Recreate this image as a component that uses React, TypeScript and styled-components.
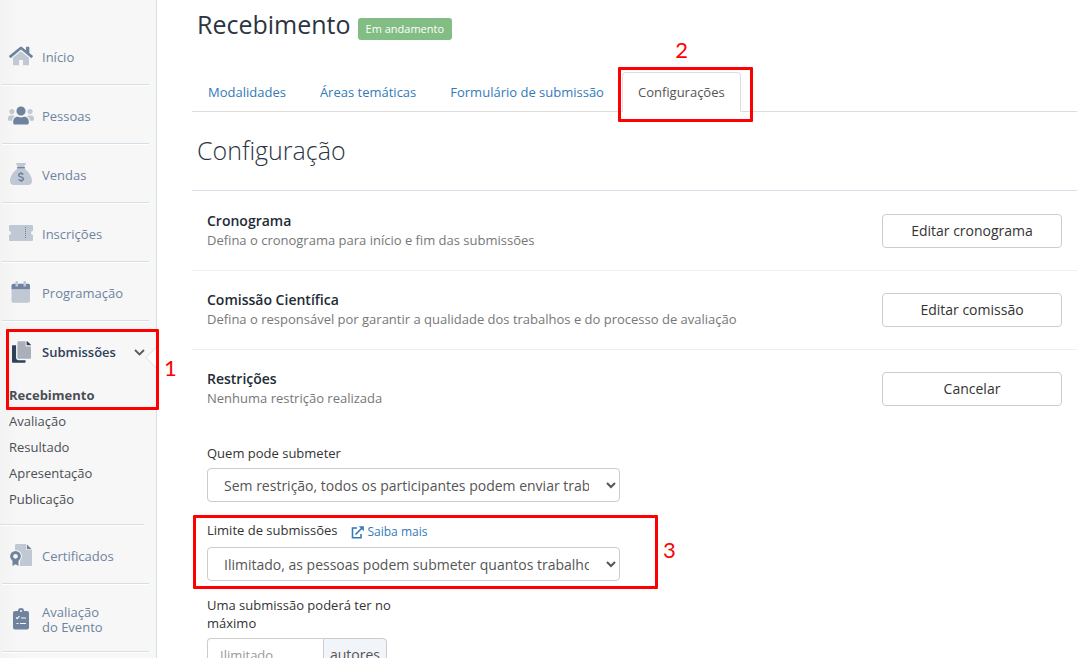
import React from "react";
import styled, { createGlobalStyle, css } from "styled-components";

const GlobalStyle = createGlobalStyle`
  *, *::before, *::after { box-sizing: border-box; }
  body {
    margin: 0;
    background: #fff;
    color: #333;
    font-family: "Open Sans", "Liberation Sans", sans-serif;
    font-size: 13px;
    line-height: 18px;
  }
`;

const Shell = styled.div`
  display: flex;
  height: 100vh;
  overflow: hidden;
`;

/* ---------- sidebar ---------- */

const Sidebar = styled.nav`
  flex: 0 0 157px;
  padding-top: 26px;
  border-right: 1px solid #d5dfe8;
  background: linear-gradient(to right, #f3f3f3, #f7f7f7 20px);
`;

const NavItem = styled.a<{ $active?: boolean; $tall?: boolean }>`
  display: flex;
  align-items: center;
  gap: 8px;
  height: ${(p) => (p.$tall ? 68 : 59)}px;
  margin: 0 7px 0 2px;
  padding: 4px 0 0 6px;
  border-bottom: 1px solid #d5dfe8;
  box-shadow: 0 1px 0 #fff;
  color: #6f839f;
  line-height: 15px;
  text-decoration: none;
  ${(p) =>
    p.$active &&
    css`
      position: relative;
      border-bottom: 0;
      box-shadow: none;
      color: #2f4059;
      font-weight: 600;
    `}
`;

const NavText = styled.span`
  max-width: 74px;
`;

const IconSlot = styled.span`
  display: flex;
  flex: 0 0 26px;
  justify-content: center;
  padding-bottom: 2px;
`;

const Chevron = styled.svg`
  margin: 0 4px 0 auto;
`;

const Notch = styled.svg`
  position: absolute;
  right: -8px;
  top: 25px;
`;

const Group = styled.div`
  position: relative;
`;

const SubList = styled.ul`
  margin: 0 12px 0 0;
  padding: 2px 0 12px 9px;
  border-bottom: 1px solid #d5dfe8;
  box-shadow: 0 1px 0 #fff;
  list-style: none;
`;

const SubLink = styled.a<{ $current?: boolean }>`
  display: block;
  color: #4b4f55;
  font-weight: ${(p) => (p.$current ? 700 : 400)};
  line-height: 26px;
  text-decoration: none;
`;

/* ---------- callouts ---------- */

const Frame = styled.div<{ $inset: string }>`
  position: absolute;
  inset: ${(p) => p.$inset};
  z-index: 2;
  border: 3px solid #fe0000;
  border-radius: 1px;
  pointer-events: none;
`;

const Mark = styled.span<{ $place: "right" | "top" }>`
  position: absolute;
  color: #fe0000;
  font: 400 22px/24px Lato, sans-serif;
  ${(p) =>
    p.$place === "right"
      ? css`
          left: calc(100% + 8px);
          top: calc(50% - 14px);
        `
      : css`
          left: calc(50% - 10px);
          bottom: calc(100% + 8px);
        `}
`;

/* ---------- main column ---------- */

const Main = styled.main`
  flex: 1;
  min-width: 0;
  padding: 6px 5px 0 35px;
`;

const TitleRow = styled.header`
  display: flex;
  align-items: center;
  gap: 7px;
  height: 36px;
  padding-left: 5px;
`;

const Title = styled.h1`
  margin: 0;
  color: #2b3440;
  font-size: 25px;
  font-weight: 400;
  line-height: 36px;
`;

const Badge = styled.span`
  margin-top: 9px;
  padding: 0 8px;
  border-radius: 3px;
  background: #82bd84;
  color: #fff;
  font-size: 11px;
  line-height: 22px;
`;

const Tabs = styled.div`
  display: flex;
  gap: 2px;
  height: 40px;
  margin-top: 30px;
  border-bottom: 1px solid #ddd;
`;

const TabWrap = styled.div`
  position: relative;
`;

const Tab = styled.a<{ $active?: boolean }>`
  display: block;
  height: 40px;
  padding: 10px 15px;
  border: 1px solid transparent;
  border-radius: 4px 4px 0 0;
  color: #337ab7;
  text-decoration: none;
  white-space: nowrap;
  ${(p) =>
    p.$active &&
    css`
      border-color: #ddd #ddd #fff;
      background: #fff;
      color: #555;
    `}
`;

const SectionTitle = styled.h2`
  margin: 0;
  padding: 20px 5px 22px;
  border-bottom: 1px solid #d9dfe8;
  color: #2b3440;
  font-size: 25px;
  font-weight: 300;
  line-height: 36px;
`;

const Rows = styled.div`
  padding-top: 1px;
`;

const Row = styled.section<{ $last?: boolean }>`
  display: flex;
  align-items: center;
  justify-content: space-between;
  height: 79px;
  border-bottom: 1px solid ${(p) => (p.$last ? "transparent" : "#eee")};
  padding: 0 15px;
`;

const RowTitle = styled.h3`
  margin: 0;
  color: #222b36;
  font-size: 14px;
  font-weight: 600;
  line-height: 18px;
`;

const RowText = styled.p`
  margin: 0;
  color: #777;
  line-height: 20px;
`;

const Button = styled.button`
  flex: 0 0 180px;
  height: 34px;
  border: 1px solid #ccc;
  border-radius: 4px;
  background: #fff;
  color: #333;
  font: inherit;
  font-size: 14px;
`;

const Form = styled.form`
  padding: 15px 15px 0;
`;

const Field = styled.div<{ $gap?: number }>`
  position: relative;
  width: 413px;
  max-width: 100%;
  margin-bottom: ${(p) => p.$gap ?? 15}px;
`;

const LabelRow = styled.div`
  display: flex;
  gap: 14px;
  margin-bottom: 6px;
`;

const Label = styled.label`
  display: block;
  max-width: 200px;
`;

const HelpLink = styled.a`
  display: flex;
  align-items: center;
  gap: 3px;
  padding-top: 2px;
  color: #337ab7;
  font-size: 12px;
  text-decoration: none;
`;

const Select = styled.select`
  display: block;
  width: 100%;
  height: 34px;
  padding: 6px 14px 6px 12px;
  border: 1px solid #ccc;
  border-radius: 4px;
  background: #fff;
  color: #555;
  font: inherit;
  font-size: 14px;
`;

const InputGroup = styled.div`
  display: flex;
  width: 180px;
  margin-top: 6px;
`;

const Input = styled.input`
  flex: 1;
  min-width: 0;
  height: 34px;
  padding: 6px 12px;
  border: 1px solid #ccc;
  border-right: 0;
  border-radius: 4px 0 0 4px;
  font: inherit;
  &::placeholder { color: #999; }
`;

const Addon = styled.span`
  padding: 0 6px;
  border: 1px solid #ccc;
  border-radius: 0 4px 4px 0;
  background: #f1f4f9;
  color: #555;
  font-size: 14px;
  line-height: 32px;
`;

/* ---------- icons ---------- */

const DARK = "#6f839f";
const LIGHT = "#bfc8d3";

const HomeIcon = () => (
  <svg width="24" height="22" viewBox="0 0 576 512" aria-hidden="true">
    <path fill={LIGHT} d="M280.4 148.3L96 300.1V464a16 16 0 0 0 16 16l112-.3a16 16 0 0 0 16-16V368a16 16 0 0 1 16-16h64a16 16 0 0 1 16 16v95.6a16 16 0 0 0 16 16L464 480a16 16 0 0 0 16-16V300L295.7 148.3a12.2 12.2 0 0 0-15.3 0z" />
    <path fill={DARK} d="M571.6 251.5L488 182.6V44a12 12 0 0 0-12-12h-56a12 12 0 0 0-12 12v72.7L318.5 43a48 48 0 0 0-61 0L4.3 251.5a12 12 0 0 0-1.6 16.9l25.5 31a12 12 0 0 0 16.9 1.6l235.3-193.7a12.2 12.2 0 0 1 15.3 0L530.9 301a12 12 0 0 0 16.9-1.6l25.5-31a12 12 0 0 0-1.7-16.9z" />
  </svg>
);

const PeopleIcon = () => (
  <svg width="26" height="21" viewBox="0 0 640 512" aria-hidden="true">
    <path fill={LIGHT} d="M96 224c35.3 0 64-28.7 64-64s-28.7-64-64-64-64 28.7-64 64 28.7 64 64 64zm448 0c35.3 0 64-28.7 64-64s-28.7-64-64-64-64 28.7-64 64 28.7 64 64 64zm32 32h-64c-17.6 0-33.5 7.1-45.1 18.6 40.3 22.1 68.9 62 75.1 109.4h66c17.7 0 32-14.3 32-32v-32c0-35.3-28.7-64-64-64zM173.1 274.6C161.5 263.1 145.6 256 128 256H64c-35.3 0-64 28.7-64 64v32c0 17.7 14.3 32 32 32h65.9c6.3-47.4 34.9-87.3 75.2-109.4z" />
    <path fill={DARK} d="M320 256c61.9 0 112-50.1 112-112S381.9 32 320 32 208 82.1 208 144s50.1 112 112 112zm76.8 32h-8.3c-20.8 10-43.9 16-68.5 16s-47.6-6-68.5-16h-8.3C179.6 288 128 339.6 128 403.2V432c0 26.5 21.5 48 48 48h288c26.5 0 48-21.5 48-48v-28.8c0-63.6-51.6-115.2-115.2-115.2z" />
  </svg>
);

const MoneyIcon = () => (
  <svg width="22" height="22" viewBox="0 0 22 22" aria-hidden="true">
    <path fill={LIGHT} d="M6.2.9C5.900.4 6.200 0 6.700 0h8.600c.5 0 .8.400.5.900L14 4H8zM7.500 5.500h7C17.500 7.800 22 12.500 22 18c0 2.500-1.500 4-4 4H4c-2.500 0-4-1.500-4-4 0-5.500 4.500-10.200 7.500-12.500z" />
    <rect x="7" y="4" width="8" height="1.600" rx=".5" fill={DARK} />
    <path fill="none" stroke={DARK} strokeWidth="1.500" d="M13.300 11.500c-.5-.7-1.300-1-2.300-1-1.300 0-2.300.7-2.300 1.700 0 2.300 4.700 1.200 4.700 3.500 0 1.100-1.100 1.800-2.400 1.800-1.100 0-2-.4-2.500-1.100M11 9v1.500M11 17.500V19" />
  </svg>
);

const TicketIcon = () => (
  <svg width="24" height="16" viewBox="0 0 24 16" aria-hidden="true">
    <path fill={LIGHT} d="M1 0h22a1 1 0 0 1 1 1v5a2 2 0 0 0 0 4v5a1 1 0 0 1-1 1H1a1 1 0 0 1-1-1v-5a2 2 0 0 0 0-4V1a1 1 0 0 1 1-1z" />
    <path stroke={DARK} strokeWidth="1" strokeDasharray="1 1" d="M16.500 2v12" />
  </svg>
);

const CalendarIcon = () => (
  <svg width="20" height="22" viewBox="0 0 20 22" aria-hidden="true">
    <path fill={LIGHT} d="M.500 8.200h18.500V20a1.800 1.800 0 0 1-1.800 1.800H2.300A1.800 1.800 0 0 1 .500 20z" />
    <path fill={DARK} d="M2.300 2.800h15A1.800 1.800 0 0 1 19 4.500v3.700H.500V4.500a1.800 1.800 0 0 1 1.800-1.700z" />
    <path fill={LIGHT} d="M4.500.600a.6.6 0 0 1 .6-.6h1.300a.6.6 0 0 1 .6.600v4.900H4.500zM12.500.600a.6.6 0 0 1 .6-.6h1.300a.6.6 0 0 1 .6.600v4.900h-2.500z" />
  </svg>
);

const CopyIcon = () => (
  <svg width="19" height="22" viewBox="0 0 448 512" aria-hidden="true">
    <path fill="#2f4059" d="M320 448v40c0 13.300-10.700 24-24 24H24c-13.300 0-24-10.700-24-24V120c0-13.300 10.700-24 24-24h72v296c0 30.900 25.100 56 56 56h168zM448 97.900V96a24 24 0 0 0-7-15L367 7a24 24 0 0 0-17-7h-6v96h104z" />
    <path fill="#a9b0ba" d="M320 0H152c-13.300 0-24 10.700-24 24v368c0 13.300 10.700 24 24 24h272c13.300 0 24-10.700 24-24V128H344c-13.200 0-24-10.800-24-24z" />
  </svg>
);

const CertificateIcon = () => (
  <svg width="22" height="22" viewBox="0 0 22 22" aria-hidden="true">
    <path fill={LIGHT} d="M7 0h9v6h6v15a1 1 0 0 1-1 1H10v-5.500c2-1.500 2.500-5 1-7.500C9.800 7 7.700 6 5 6V1.500C5 .500 5.500 0 7 0z" />
    <path fill={DARK} d="M16.800.300L21.700 5.200H16.800z" />
    <circle cx="5.500" cy="12.300" r="3.900" fill="none" stroke={DARK} strokeWidth="3" />
    <path fill={DARK} d="M2.500 16h6v6l-3-1.800L2.500 22z" />
  </svg>
);

const ClipboardIcon = () => (
  <svg width="16" height="22" viewBox="0 0 16 22" aria-hidden="true">
    <path fill={DARK} d="M2 3h3a3 3 0 0 1 6 0h3a2 2 0 0 1 2 2v14.500a2 2 0 0 1-2 2H2a2 2 0 0 1-2-2V5a2 2 0 0 1 2-2z" />
    <circle cx="8" cy="3" r="1" fill="#f7f7f7" />
    <path fill="none" stroke="#f7f7f7" strokeWidth="1.200" d="M3 9.500l1.200 1.200 2.300-2.500M8 10h5M7 15.500h6M3.500 15.500h2" />
  </svg>
);

const ExternalIcon = () => (
  <svg width="13" height="13" viewBox="0 0 13 13" fill="none" stroke="#337ab7" strokeWidth="1.600" aria-hidden="true">
    <path d="M6 2H1.500v9.700H10V8M4.500 8.500L11 2" />
    <path d="M7.800.200h5v5z" fill="#337ab7" stroke="none" />
  </svg>
);

/* ---------- page ---------- */

const topItems: [string, React.FC][] = [
  ["Início", HomeIcon],
  ["Pessoas", PeopleIcon],
  ["Vendas", MoneyIcon],
  ["Inscrições", TicketIcon],
  ["Programação", CalendarIcon],
];

const subItems = ["Recebimento", "Avaliação", "Resultado", "Apresentação", "Publicação"];

const tabs = ["Modalidades", "Áreas temáticas", "Formulário de submissão"];

const rows = [
  ["Cronograma", "Defina o cronograma para início e fim das submissões", "Editar cronograma"],
  [
    "Comissão Científica",
    "Defina o responsável por garantir a qualidade dos trabalhos e do processo de avaliação",
    "Editar comissão",
  ],
  ["Restrições", "Nenhuma restrição realizada", "Cancelar"],
];

export default function App() {
  return (
    <>
      <GlobalStyle />
      <Shell>
        <Sidebar>
          {topItems.map(([name, Icon]) => (
            <NavItem href="#" key={name}>
              <IconSlot><Icon /></IconSlot>
              {name}
            </NavItem>
          ))}
          <Group>
            <NavItem href="#" $active>
              <IconSlot><CopyIcon /></IconSlot>
              Submissões
              <Chevron width="11" height="7" viewBox="0 0 11 7" aria-hidden="true">
                <path d="M1 1l4.500 4.500L10 1" fill="none" stroke="#555b64" strokeWidth="1.800" />
              </Chevron>
              <Notch width="12" height="23" viewBox="0 0 12 23" aria-hidden="true">
                <path d="M12 0.500L1 11.500l11 11" fill="#fff" stroke="#d5dfe8" />
              </Notch>
            </NavItem>
            <SubList>
              {subItems.map((name, i) => (
                <li key={name}>
                  <SubLink href="#" $current={i === 0}>{name}</SubLink>
                </li>
              ))}
            </SubList>
            <Frame $inset="8px -3px 115px 6px">
              <Mark $place="right">1</Mark>
            </Frame>
          </Group>
          <NavItem href="#">
            <IconSlot><CertificateIcon /></IconSlot>
            Certificados
          </NavItem>
          <NavItem href="#" $tall>
            <IconSlot><ClipboardIcon /></IconSlot>
            <NavText>Avaliação do Evento</NavText>
          </NavItem>
        </Sidebar>

        <Main>
          <TitleRow>
            <Title>Recebimento</Title>
            <Badge>Em andamento</Badge>
          </TitleRow>

          <Tabs>
            {tabs.map((name) => (
              <Tab href="#" key={name}>{name}</Tab>
            ))}
            <TabWrap>
              <Tab href="#" $active>Configurações</Tab>
              <Frame $inset="-5px -12px -11px -4px">
                <Mark $place="top">2</Mark>
              </Frame>
            </TabWrap>
          </Tabs>

          <SectionTitle>Configuração</SectionTitle>

          <Rows>
            {rows.map(([title, text, action], i) => (
              <Row key={title} $last={i === rows.length - 1}>
                <div>
                  <RowTitle>{title}</RowTitle>
                  <RowText>{text}</RowText>
                </div>
                <Button type="button">{action}</Button>
              </Row>
            ))}
          </Rows>

          <Form>
            <Field $gap={19}>
              <LabelRow>
                <Label htmlFor="who">Quem pode submeter</Label>
              </LabelRow>
              <Select id="who">
                <option>Sem restrição, todos os participantes podem enviar trabalhos</option>
              </Select>
            </Field>
            <Field>
              <LabelRow>
                <Label htmlFor="limit">Limite de submissões</Label>
                <HelpLink href="#"><ExternalIcon />Saiba mais</HelpLink>
              </LabelRow>
              <Select id="limit">
                <option>Ilimitado, as pessoas podem submeter quantos trabalhos quiserem</option>
              </Select>
              <Frame $inset="-6px -38px -8px -14px">
                <Mark $place="right">3</Mark>
              </Frame>
            </Field>
            <Field>
              <Label htmlFor="authors">Uma submissão poderá ter no máximo</Label>
              <InputGroup>
                <Input id="authors" placeholder="Ilimitado" />
                <Addon>autores</Addon>
              </InputGroup>
            </Field>
          </Form>
        </Main>
      </Shell>
    </>
  );
}
